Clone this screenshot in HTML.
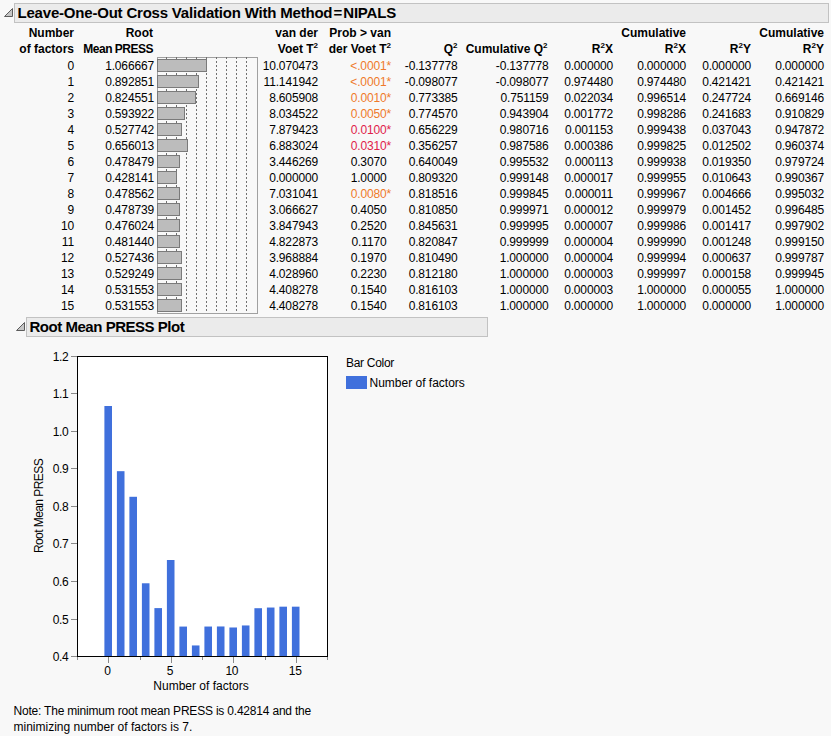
<!DOCTYPE html>
<html><head><meta charset="utf-8"><style>
html,body{margin:0;padding:0;}
body{width:831px;height:736px;overflow:hidden;background:#f8f8f8;position:relative;font-family:"Liberation Sans",sans-serif;color:#000;}
.d,.h{position:absolute;left:0;text-align:right;white-space:pre;height:16px;line-height:16px;}
.d{font-size:12px;letter-spacing:-0.15px;}
.h{font-size:12px;font-weight:bold;letter-spacing:0px;}
.o{color:#ef7a2a;}
.r{color:#e0224a;}
.t{position:absolute;white-space:pre;line-height:16px;}
svg{position:absolute;left:0;top:0;}
</style></head><body>

<svg width="831" height="736" shape-rendering="crispEdges">
<rect x="14.5" y="3.5" width="814" height="19" fill="#ebebeb" stroke="#c2c2c2" stroke-width="1"/>
<rect x="26.5" y="317.5" width="461" height="19" fill="#ebebeb" stroke="#c2c2c2" stroke-width="1"/>
<g shape-rendering="geometricPrecision"><polygon points="4.5,16.5 12.5,8.5 12.5,16.5" fill="#c6c6c6" stroke="#5c5c5c" stroke-width="1"/>
<polygon points="16.5,330.5 24.5,322.5 24.5,330.5" fill="#c6c6c6" stroke="#5c5c5c" stroke-width="1"/></g>
<rect x="157.5" y="57.5" width="100" height="256" fill="none" stroke="#a0a0a0" stroke-width="1"/>
<line x1="166.5" y1="57" x2="166.5" y2="313" stroke="#707070" stroke-width="1" stroke-dasharray="2 2"/>
<line x1="176.5" y1="57" x2="176.5" y2="313" stroke="#707070" stroke-width="1" stroke-dasharray="2 2"/>
<line x1="186.5" y1="57" x2="186.5" y2="313" stroke="#707070" stroke-width="1" stroke-dasharray="2 2"/>
<line x1="196.5" y1="57" x2="196.5" y2="313" stroke="#707070" stroke-width="1" stroke-dasharray="2 2"/>
<line x1="206.5" y1="57" x2="206.5" y2="313" stroke="#707070" stroke-width="1" stroke-dasharray="2 2"/>
<line x1="216.5" y1="57" x2="216.5" y2="313" stroke="#707070" stroke-width="1" stroke-dasharray="2 2"/>
<line x1="226.5" y1="57" x2="226.5" y2="313" stroke="#707070" stroke-width="1" stroke-dasharray="2 2"/>
<line x1="236.5" y1="57" x2="236.5" y2="313" stroke="#707070" stroke-width="1" stroke-dasharray="2 2"/>
<line x1="246.5" y1="57" x2="246.5" y2="313" stroke="#707070" stroke-width="1" stroke-dasharray="2 2"/>
<rect x="157.5" y="59.5" width="49" height="12" fill="#bcbcbc" stroke="#7a7a7a" stroke-width="1"/>
<rect x="157.5" y="75.5" width="41" height="12" fill="#bcbcbc" stroke="#7a7a7a" stroke-width="1"/>
<rect x="157.5" y="91.5" width="38" height="12" fill="#bcbcbc" stroke="#7a7a7a" stroke-width="1"/>
<rect x="157.5" y="107.5" width="27" height="12" fill="#bcbcbc" stroke="#7a7a7a" stroke-width="1"/>
<rect x="157.5" y="123.5" width="24" height="12" fill="#bcbcbc" stroke="#7a7a7a" stroke-width="1"/>
<rect x="157.5" y="139.5" width="30" height="12" fill="#bcbcbc" stroke="#7a7a7a" stroke-width="1"/>
<rect x="157.5" y="155.5" width="22" height="12" fill="#bcbcbc" stroke="#7a7a7a" stroke-width="1"/>
<rect x="157.5" y="171.5" width="19" height="12" fill="#bcbcbc" stroke="#7a7a7a" stroke-width="1"/>
<rect x="157.5" y="187.5" width="22" height="12" fill="#bcbcbc" stroke="#7a7a7a" stroke-width="1"/>
<rect x="157.5" y="203.5" width="22" height="12" fill="#bcbcbc" stroke="#7a7a7a" stroke-width="1"/>
<rect x="157.5" y="219.5" width="22" height="12" fill="#bcbcbc" stroke="#7a7a7a" stroke-width="1"/>
<rect x="157.5" y="235.5" width="22" height="12" fill="#bcbcbc" stroke="#7a7a7a" stroke-width="1"/>
<rect x="157.5" y="251.5" width="24" height="12" fill="#bcbcbc" stroke="#7a7a7a" stroke-width="1"/>
<rect x="157.5" y="267.5" width="24" height="12" fill="#bcbcbc" stroke="#7a7a7a" stroke-width="1"/>
<rect x="157.5" y="283.5" width="24" height="12" fill="#bcbcbc" stroke="#7a7a7a" stroke-width="1"/>
<rect x="157.5" y="299.5" width="24" height="12" fill="#bcbcbc" stroke="#7a7a7a" stroke-width="1"/>
<rect x="77" y="356" width="250" height="300" fill="#ffffff"/>
<line x1="71" y1="356.5" x2="77" y2="356.5" stroke="#8a8a8a" stroke-width="1"/>
<line x1="71" y1="393.5" x2="77" y2="393.5" stroke="#8a8a8a" stroke-width="1"/>
<line x1="71" y1="431.5" x2="77" y2="431.5" stroke="#8a8a8a" stroke-width="1"/>
<line x1="71" y1="468.5" x2="77" y2="468.5" stroke="#8a8a8a" stroke-width="1"/>
<line x1="71" y1="506.5" x2="77" y2="506.5" stroke="#8a8a8a" stroke-width="1"/>
<line x1="71" y1="543.5" x2="77" y2="543.5" stroke="#8a8a8a" stroke-width="1"/>
<line x1="71" y1="581.5" x2="77" y2="581.5" stroke="#8a8a8a" stroke-width="1"/>
<line x1="71" y1="619.5" x2="77" y2="619.5" stroke="#8a8a8a" stroke-width="1"/>
<line x1="71" y1="656.5" x2="77" y2="656.5" stroke="#8a8a8a" stroke-width="1"/>
<rect x="104.40" y="406.00" width="7.6" height="250.00" fill="#4070dc" shape-rendering="geometricPrecision"/>
<rect x="116.90" y="471.18" width="7.6" height="184.82" fill="#4070dc" shape-rendering="geometricPrecision"/>
<rect x="129.40" y="496.79" width="7.6" height="159.21" fill="#4070dc" shape-rendering="geometricPrecision"/>
<rect x="141.90" y="583.28" width="7.6" height="72.72" fill="#4070dc" shape-rendering="geometricPrecision"/>
<rect x="154.40" y="608.10" width="7.6" height="47.90" fill="#4070dc" shape-rendering="geometricPrecision"/>
<rect x="166.90" y="560.00" width="7.6" height="96.00" fill="#4070dc" shape-rendering="geometricPrecision"/>
<rect x="179.40" y="626.57" width="7.6" height="29.43" fill="#4070dc" shape-rendering="geometricPrecision"/>
<rect x="191.90" y="645.45" width="7.6" height="10.55" fill="#4070dc" shape-rendering="geometricPrecision"/>
<rect x="204.40" y="626.54" width="7.6" height="29.46" fill="#4070dc" shape-rendering="geometricPrecision"/>
<rect x="216.90" y="626.47" width="7.6" height="29.53" fill="#4070dc" shape-rendering="geometricPrecision"/>
<rect x="229.40" y="627.49" width="7.6" height="28.51" fill="#4070dc" shape-rendering="geometricPrecision"/>
<rect x="241.90" y="625.46" width="7.6" height="30.54" fill="#4070dc" shape-rendering="geometricPrecision"/>
<rect x="254.40" y="608.21" width="7.6" height="47.79" fill="#4070dc" shape-rendering="geometricPrecision"/>
<rect x="266.90" y="607.53" width="7.6" height="48.47" fill="#4070dc" shape-rendering="geometricPrecision"/>
<rect x="279.40" y="606.67" width="7.6" height="49.33" fill="#4070dc" shape-rendering="geometricPrecision"/>
<rect x="291.90" y="606.67" width="7.6" height="49.33" fill="#4070dc" shape-rendering="geometricPrecision"/>
<line x1="77.5" y1="657" x2="77.5" y2="660" stroke="#8a8a8a" stroke-width="1"/>
<line x1="108.5" y1="657" x2="108.5" y2="663" stroke="#8a8a8a" stroke-width="1"/>
<line x1="140.5" y1="657" x2="140.5" y2="660" stroke="#8a8a8a" stroke-width="1"/>
<line x1="171.5" y1="657" x2="171.5" y2="663" stroke="#8a8a8a" stroke-width="1"/>
<line x1="202.5" y1="657" x2="202.5" y2="660" stroke="#8a8a8a" stroke-width="1"/>
<line x1="233.5" y1="657" x2="233.5" y2="663" stroke="#8a8a8a" stroke-width="1"/>
<line x1="265.5" y1="657" x2="265.5" y2="660" stroke="#8a8a8a" stroke-width="1"/>
<line x1="296.5" y1="657" x2="296.5" y2="663" stroke="#8a8a8a" stroke-width="1"/>
<line x1="327.5" y1="657" x2="327.5" y2="660" stroke="#8a8a8a" stroke-width="1"/>
<rect x="77.5" y="356.5" width="250" height="300" fill="none" stroke="#000" stroke-width="1"/>
<rect x="346" y="376" width="21" height="13" fill="#4070dc"/>
</svg>
<div class="t" style="left:17.5px;top:4.50px;font-size:15px;font-weight:bold;letter-spacing:-0.2px">Leave-One-Out Cross Validation With Method<span style="margin:0 1.2px">=</span>NIPALS</div>
<div class="t" style="left:29.5px;top:318.50px;font-size:15px;font-weight:bold;letter-spacing:-0.47px">Root Mean PRESS Plot</div>
<div class="h" style="width:74px;top:24.84px">Number</div>
<div class="h" style="width:74px;top:41.34px">of factors</div>
<div class="h" style="width:153px;top:24.84px">Root</div>
<div class="h" style="width:153px;top:41.34px;letter-spacing:-0.5px">Mean PRESS</div>
<div class="h" style="width:318px;top:24.84px">van der</div>
<div class="h" style="width:318px;top:41.34px">Voet T<span style="font-size:8px;position:relative;top:-5px">2</span></div>
<div class="h" style="width:391px;top:24.84px">Prob &gt; van</div>
<div class="h" style="width:391px;top:41.34px">der Voet T<span style="font-size:8px;position:relative;top:-5px">2</span></div>
<div class="h" style="width:457.5px;top:41.34px">Q<span style="font-size:8px;position:relative;top:-5px">2</span></div>
<div class="h" style="width:547.5px;top:41.34px">Cumulative Q<span style="font-size:8px;position:relative;top:-5px">2</span></div>
<div class="h" style="width:613px;top:41.34px">R<span style="font-size:8px;position:relative;top:-5px">2</span>X</div>
<div class="h" style="width:686px;top:24.84px">Cumulative</div>
<div class="h" style="width:686px;top:41.34px">R<span style="font-size:8px;position:relative;top:-5px">2</span>X</div>
<div class="h" style="width:751px;top:41.34px">R<span style="font-size:8px;position:relative;top:-5px">2</span>Y</div>
<div class="h" style="width:824px;top:24.84px">Cumulative</div>
<div class="h" style="width:824px;top:41.34px">R<span style="font-size:8px;position:relative;top:-5px">2</span>Y</div>
<div class="d" style="width:74px;top:57.84px">0</div>
<div class="d" style="width:154px;top:57.84px">1.066667</div>
<div class="d" style="width:318px;top:57.84px">10.070473</div>
<div class="d o" style="width:391px;top:57.84px">&lt;.0001*</div>
<div class="d" style="width:457.5px;top:57.84px">-0.137778</div>
<div class="d" style="width:548.5px;top:57.84px">-0.137778</div>
<div class="d" style="width:613px;top:57.84px">0.000000</div>
<div class="d" style="width:686px;top:57.84px">0.000000</div>
<div class="d" style="width:751px;top:57.84px">0.000000</div>
<div class="d" style="width:824px;top:57.84px">0.000000</div>
<div class="d" style="width:74px;top:73.84px">1</div>
<div class="d" style="width:154px;top:73.84px">0.892851</div>
<div class="d" style="width:318px;top:73.84px">11.141942</div>
<div class="d o" style="width:391px;top:73.84px">&lt;.0001*</div>
<div class="d" style="width:457.5px;top:73.84px">-0.098077</div>
<div class="d" style="width:548.5px;top:73.84px">-0.098077</div>
<div class="d" style="width:613px;top:73.84px">0.974480</div>
<div class="d" style="width:686px;top:73.84px">0.974480</div>
<div class="d" style="width:751px;top:73.84px">0.421421</div>
<div class="d" style="width:824px;top:73.84px">0.421421</div>
<div class="d" style="width:74px;top:89.84px">2</div>
<div class="d" style="width:154px;top:89.84px">0.824551</div>
<div class="d" style="width:318px;top:89.84px">8.605908</div>
<div class="d o" style="width:391px;top:89.84px">0.0010*</div>
<div class="d" style="width:457.5px;top:89.84px">0.773385</div>
<div class="d" style="width:548.5px;top:89.84px">0.751159</div>
<div class="d" style="width:613px;top:89.84px">0.022034</div>
<div class="d" style="width:686px;top:89.84px">0.996514</div>
<div class="d" style="width:751px;top:89.84px">0.247724</div>
<div class="d" style="width:824px;top:89.84px">0.669146</div>
<div class="d" style="width:74px;top:105.84px">3</div>
<div class="d" style="width:154px;top:105.84px">0.593922</div>
<div class="d" style="width:318px;top:105.84px">8.034522</div>
<div class="d o" style="width:391px;top:105.84px">0.0050*</div>
<div class="d" style="width:457.5px;top:105.84px">0.774570</div>
<div class="d" style="width:548.5px;top:105.84px">0.943904</div>
<div class="d" style="width:613px;top:105.84px">0.001772</div>
<div class="d" style="width:686px;top:105.84px">0.998286</div>
<div class="d" style="width:751px;top:105.84px">0.241683</div>
<div class="d" style="width:824px;top:105.84px">0.910829</div>
<div class="d" style="width:74px;top:121.84px">4</div>
<div class="d" style="width:154px;top:121.84px">0.527742</div>
<div class="d" style="width:318px;top:121.84px">7.879423</div>
<div class="d r" style="width:391px;top:121.84px">0.0100*</div>
<div class="d" style="width:457.5px;top:121.84px">0.656229</div>
<div class="d" style="width:548.5px;top:121.84px">0.980716</div>
<div class="d" style="width:613px;top:121.84px">0.001153</div>
<div class="d" style="width:686px;top:121.84px">0.999438</div>
<div class="d" style="width:751px;top:121.84px">0.037043</div>
<div class="d" style="width:824px;top:121.84px">0.947872</div>
<div class="d" style="width:74px;top:137.84px">5</div>
<div class="d" style="width:154px;top:137.84px">0.656013</div>
<div class="d" style="width:318px;top:137.84px">6.883024</div>
<div class="d r" style="width:391px;top:137.84px">0.0310*</div>
<div class="d" style="width:457.5px;top:137.84px">0.356257</div>
<div class="d" style="width:548.5px;top:137.84px">0.987586</div>
<div class="d" style="width:613px;top:137.84px">0.000386</div>
<div class="d" style="width:686px;top:137.84px">0.999825</div>
<div class="d" style="width:751px;top:137.84px">0.012502</div>
<div class="d" style="width:824px;top:137.84px">0.960374</div>
<div class="d" style="width:74px;top:153.84px">6</div>
<div class="d" style="width:154px;top:153.84px">0.478479</div>
<div class="d" style="width:318px;top:153.84px">3.446269</div>
<div class="d" style="width:391px;top:153.84px">0.3070<span style="visibility:hidden">*</span></div>
<div class="d" style="width:457.5px;top:153.84px">0.640049</div>
<div class="d" style="width:548.5px;top:153.84px">0.995532</div>
<div class="d" style="width:613px;top:153.84px">0.000113</div>
<div class="d" style="width:686px;top:153.84px">0.999938</div>
<div class="d" style="width:751px;top:153.84px">0.019350</div>
<div class="d" style="width:824px;top:153.84px">0.979724</div>
<div class="d" style="width:74px;top:169.84px">7</div>
<div class="d" style="width:154px;top:169.84px">0.428141</div>
<div class="d" style="width:318px;top:169.84px">0.000000</div>
<div class="d" style="width:391px;top:169.84px">1.0000<span style="visibility:hidden">*</span></div>
<div class="d" style="width:457.5px;top:169.84px">0.809320</div>
<div class="d" style="width:548.5px;top:169.84px">0.999148</div>
<div class="d" style="width:613px;top:169.84px">0.000017</div>
<div class="d" style="width:686px;top:169.84px">0.999955</div>
<div class="d" style="width:751px;top:169.84px">0.010643</div>
<div class="d" style="width:824px;top:169.84px">0.990367</div>
<div class="d" style="width:74px;top:185.84px">8</div>
<div class="d" style="width:154px;top:185.84px">0.478562</div>
<div class="d" style="width:318px;top:185.84px">7.031041</div>
<div class="d o" style="width:391px;top:185.84px">0.0080*</div>
<div class="d" style="width:457.5px;top:185.84px">0.818516</div>
<div class="d" style="width:548.5px;top:185.84px">0.999845</div>
<div class="d" style="width:613px;top:185.84px">0.000011</div>
<div class="d" style="width:686px;top:185.84px">0.999967</div>
<div class="d" style="width:751px;top:185.84px">0.004666</div>
<div class="d" style="width:824px;top:185.84px">0.995032</div>
<div class="d" style="width:74px;top:201.84px">9</div>
<div class="d" style="width:154px;top:201.84px">0.478739</div>
<div class="d" style="width:318px;top:201.84px">3.066627</div>
<div class="d" style="width:391px;top:201.84px">0.4050<span style="visibility:hidden">*</span></div>
<div class="d" style="width:457.5px;top:201.84px">0.810850</div>
<div class="d" style="width:548.5px;top:201.84px">0.999971</div>
<div class="d" style="width:613px;top:201.84px">0.000012</div>
<div class="d" style="width:686px;top:201.84px">0.999979</div>
<div class="d" style="width:751px;top:201.84px">0.001452</div>
<div class="d" style="width:824px;top:201.84px">0.996485</div>
<div class="d" style="width:74px;top:217.84px">10</div>
<div class="d" style="width:154px;top:217.84px">0.476024</div>
<div class="d" style="width:318px;top:217.84px">3.847943</div>
<div class="d" style="width:391px;top:217.84px">0.2520<span style="visibility:hidden">*</span></div>
<div class="d" style="width:457.5px;top:217.84px">0.845631</div>
<div class="d" style="width:548.5px;top:217.84px">0.999995</div>
<div class="d" style="width:613px;top:217.84px">0.000007</div>
<div class="d" style="width:686px;top:217.84px">0.999986</div>
<div class="d" style="width:751px;top:217.84px">0.001417</div>
<div class="d" style="width:824px;top:217.84px">0.997902</div>
<div class="d" style="width:74px;top:233.84px">11</div>
<div class="d" style="width:154px;top:233.84px">0.481440</div>
<div class="d" style="width:318px;top:233.84px">4.822873</div>
<div class="d" style="width:391px;top:233.84px">0.1170<span style="visibility:hidden">*</span></div>
<div class="d" style="width:457.5px;top:233.84px">0.820847</div>
<div class="d" style="width:548.5px;top:233.84px">0.999999</div>
<div class="d" style="width:613px;top:233.84px">0.000004</div>
<div class="d" style="width:686px;top:233.84px">0.999990</div>
<div class="d" style="width:751px;top:233.84px">0.001248</div>
<div class="d" style="width:824px;top:233.84px">0.999150</div>
<div class="d" style="width:74px;top:249.84px">12</div>
<div class="d" style="width:154px;top:249.84px">0.527436</div>
<div class="d" style="width:318px;top:249.84px">3.968884</div>
<div class="d" style="width:391px;top:249.84px">0.1970<span style="visibility:hidden">*</span></div>
<div class="d" style="width:457.5px;top:249.84px">0.810490</div>
<div class="d" style="width:548.5px;top:249.84px">1.000000</div>
<div class="d" style="width:613px;top:249.84px">0.000004</div>
<div class="d" style="width:686px;top:249.84px">0.999994</div>
<div class="d" style="width:751px;top:249.84px">0.000637</div>
<div class="d" style="width:824px;top:249.84px">0.999787</div>
<div class="d" style="width:74px;top:265.84px">13</div>
<div class="d" style="width:154px;top:265.84px">0.529249</div>
<div class="d" style="width:318px;top:265.84px">4.028960</div>
<div class="d" style="width:391px;top:265.84px">0.2230<span style="visibility:hidden">*</span></div>
<div class="d" style="width:457.5px;top:265.84px">0.812180</div>
<div class="d" style="width:548.5px;top:265.84px">1.000000</div>
<div class="d" style="width:613px;top:265.84px">0.000003</div>
<div class="d" style="width:686px;top:265.84px">0.999997</div>
<div class="d" style="width:751px;top:265.84px">0.000158</div>
<div class="d" style="width:824px;top:265.84px">0.999945</div>
<div class="d" style="width:74px;top:281.84px">14</div>
<div class="d" style="width:154px;top:281.84px">0.531553</div>
<div class="d" style="width:318px;top:281.84px">4.408278</div>
<div class="d" style="width:391px;top:281.84px">0.1540<span style="visibility:hidden">*</span></div>
<div class="d" style="width:457.5px;top:281.84px">0.816103</div>
<div class="d" style="width:548.5px;top:281.84px">1.000000</div>
<div class="d" style="width:613px;top:281.84px">0.000003</div>
<div class="d" style="width:686px;top:281.84px">1.000000</div>
<div class="d" style="width:751px;top:281.84px">0.000055</div>
<div class="d" style="width:824px;top:281.84px">1.000000</div>
<div class="d" style="width:74px;top:297.84px">15</div>
<div class="d" style="width:154px;top:297.84px">0.531553</div>
<div class="d" style="width:318px;top:297.84px">4.408278</div>
<div class="d" style="width:391px;top:297.84px">0.1540<span style="visibility:hidden">*</span></div>
<div class="d" style="width:457.5px;top:297.84px">0.816103</div>
<div class="d" style="width:548.5px;top:297.84px">1.000000</div>
<div class="d" style="width:613px;top:297.84px">0.000000</div>
<div class="d" style="width:686px;top:297.84px">1.000000</div>
<div class="d" style="width:751px;top:297.84px">0.000000</div>
<div class="d" style="width:824px;top:297.84px">1.000000</div>
<div class="t" style="left:0;width:68.5px;text-align:right;top:348.84px;font-size:12px;letter-spacing:-0.3px">1.2</div>
<div class="t" style="left:0;width:68.5px;text-align:right;top:385.84px;font-size:12px;letter-spacing:-0.3px">1.1</div>
<div class="t" style="left:0;width:68.5px;text-align:right;top:423.84px;font-size:12px;letter-spacing:-0.3px">1.0</div>
<div class="t" style="left:0;width:68.5px;text-align:right;top:460.84px;font-size:12px;letter-spacing:-0.3px">0.9</div>
<div class="t" style="left:0;width:68.5px;text-align:right;top:498.84px;font-size:12px;letter-spacing:-0.3px">0.8</div>
<div class="t" style="left:0;width:68.5px;text-align:right;top:535.84px;font-size:12px;letter-spacing:-0.3px">0.7</div>
<div class="t" style="left:0;width:68.5px;text-align:right;top:573.84px;font-size:12px;letter-spacing:-0.3px">0.6</div>
<div class="t" style="left:0;width:68.5px;text-align:right;top:611.84px;font-size:12px;letter-spacing:-0.3px">0.5</div>
<div class="t" style="left:0;width:68.5px;text-align:right;top:648.84px;font-size:12px;letter-spacing:-0.3px">0.4</div>
<div class="t" style="left:77.45px;width:60px;text-align:center;top:662.84px;font-size:12px;letter-spacing:-0.3px">0</div>
<div class="t" style="left:139.95px;width:60px;text-align:center;top:662.84px;font-size:12px;letter-spacing:-0.3px">5</div>
<div class="t" style="left:201.85px;width:60px;text-align:center;top:662.84px;font-size:12px;letter-spacing:-0.3px">10</div>
<div class="t" style="left:265.15px;width:60px;text-align:center;top:662.84px;font-size:12px;letter-spacing:-0.3px">15</div>
<div class="t" style="left:141px;width:120px;text-align:center;top:678.34px;font-size:12px;letter-spacing:0px">Number of factors</div>
<div class="t" style="left:-21px;width:120px;text-align:center;top:498px;height:16px;font-size:12px;letter-spacing:-0.57px;transform:rotate(-90deg)">Root Mean PRESS</div>
<div class="t" style="left:346px;top:354.54px;font-size:12px;letter-spacing:-0.3px">Bar Color</div>
<div class="t" style="left:369.5px;top:374.84px;font-size:12px;letter-spacing:0px">Number of factors</div>
<div class="t" style="left:13.5px;top:702.84px;font-size:12px;letter-spacing:-0.2px">Note: The minimum root mean PRESS is 0.42814 and the</div>
<div class="t" style="left:13.5px;top:718.84px;font-size:12px;letter-spacing:0px">minimizing number of factors is 7.</div>
</body></html>
